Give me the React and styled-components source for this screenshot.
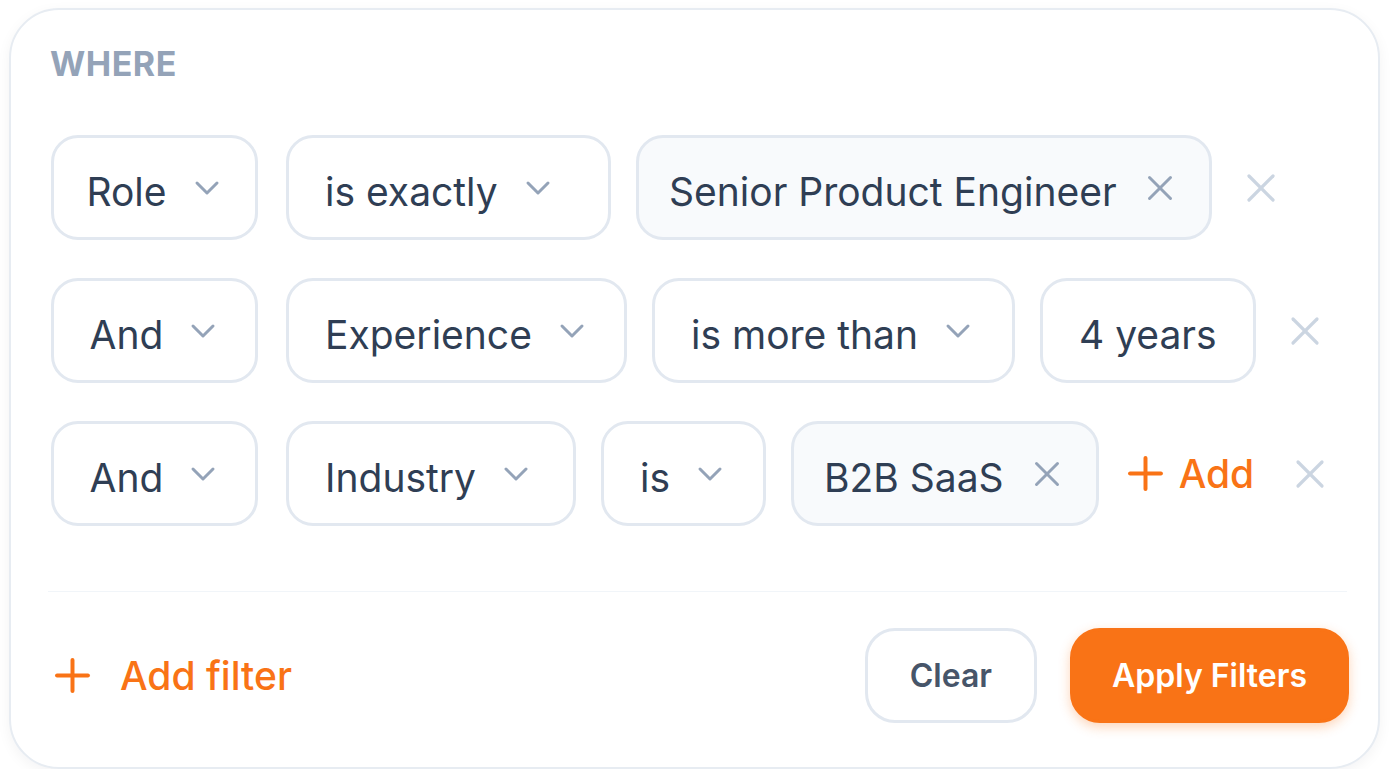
import React from 'react';
import styled, {createGlobalStyle} from 'styled-components';
import {ChevronDown, X, Plus} from 'lucide-react';

const GlobalStyle = createGlobalStyle`
    html, body {
        margin: 0;
        padding: 0;
        background: #ffffff;
        font-family: Inter, "Noto Sans", sans-serif;
    }
`;

const Card = styled.div`
    box-sizing: border-box;
    width: 1371px;
    height: 761px;
    margin: 8px 0 0 9px;
    padding: 37px 29px 44px 40px;
    border: 2px solid #e7ecf2;
    border-radius: 50px;
    background: #ffffff;
    box-shadow: 0 4px 14px rgba(15, 23, 42, 0.05);
    display: flex;
    flex-direction: column;
`;

const Title = styled.div`
    font-size: 34px;
    line-height: 34px;
    font-weight: 700;
    letter-spacing: 0.5px;
    color: #94a3b8;
    margin-left: -1px;
    margin-bottom: 54px;
`;

const Rows = styled.div`
    display: flex;
    flex-direction: column;
    gap: 38px;
`;

const Row = styled.div`
    display: flex;
    align-items: center;
    gap: 25px;
`;

const Box = styled.div`
    box-sizing: border-box;
    flex-shrink: 0;
    height: 105px;
    display: flex;
    align-items: center;
    justify-content: ${p => (p.$center ? 'center' : 'flex-start')};
    gap: ${p => (p.$chip ? '22px' : '20px')};
    width: ${p => (p.$width ? p.$width + 'px' : 'auto')};
    padding: ${p => (p.$center ? '0 0 0 4px' : p.$chip ? '0 28px 0 30px' : '0 36px')};
    margin-right: ${p => (p.$center ? '3px' : '0')};
    border: 3px solid #e2e8f0;
    border-radius: 27px;
    background: ${p => (p.$chip ? '#f8fafc' : '#ffffff')};
    color: #2f3e54;
    font-size: 39px;
    white-space: nowrap;
`;

const Label = styled.span`
    padding-top: 8px;
`;

const IconBtn = styled.span`
    display: flex;
    align-items: center;
    justify-content: center;
    flex-shrink: 0;
    color: ${p => p.$color || '#94a3b8'};
`;

const AddLink = styled.div`
    display: flex;
    align-items: center;
    flex-shrink: 0;
    gap: ${p => p.$gap}px;
    color: #f97316;
    font-size: 39px;
    font-weight: 500;
    margin-left: ${p => p.$offset || 0}px;
    margin-right: ${p => p.$after || 0}px;
`;

const Divider = styled.div`
    height: 2px;
    background: #f1f5f9;
    margin: 65px 2px 36px -3px;
`;

const Footer = styled.div`
    display: flex;
    align-items: center;
    justify-content: space-between;
`;

const Actions = styled.div`
    display: flex;
    align-items: center;
    gap: 33px;
`;

const Button = styled.button`
    box-sizing: border-box;
    height: 95px;
    padding: ${p => (p.$primary ? '0 39px' : '0 42px')};
    border-radius: 30px;
    font-family: inherit;
    font-size: 32px;
    font-weight: 600;
    cursor: pointer;
    border: 3px solid ${p => (p.$primary ? '#f97316' : '#e2e8f0')};
    background: ${p => (p.$primary ? '#f97316' : '#ffffff')};
    color: ${p => (p.$primary ? '#ffffff' : '#475569')};
    box-shadow: ${p => (p.$primary ? '0 4px 12px rgba(249, 115, 22, 0.3)' : 'none')};
`;

const Chevron = () => (
    <IconBtn><ChevronDown size={40} strokeWidth={1.8} /></IconBtn>
);

const Select = ({label, width, fixed}) => (
    <Box $center={!!fixed} $width={width}>
        <Label>{label}</Label>
        <Chevron />
    </Box>
);

const Chip = ({label}) => (
    <Box $chip>
        <Label>{label}</Label>
        <IconBtn><X size={42} strokeWidth={1.7} /></IconBtn>
    </Box>
);

const RemoveRow = () => (
    <IconBtn $color="#cbd5e1"><X size={48} strokeWidth={1.6} /></IconBtn>
);

export default function App() {
    return (
        <>
            <GlobalStyle />
            <Card>
                <Title>WHERE</Title>
                <Rows>
                    <Row>
                        <Select label="Role" width={207} fixed />
                        <Select label="is exactly" width={325} />
                        <Chip label="Senior Product Engineer" />
                        <RemoveRow />
                    </Row>
                    <Row>
                        <Select label="And" width={207} fixed />
                        <Select label="Experience" width={341} />
                        <Select label="is more than" width={363} />
                        <Box><Label>4 years</Label></Box>
                        <RemoveRow />
                    </Row>
                    <Row>
                        <Select label="And" width={207} fixed />
                        <Select label="Industry" width={290} />
                        <Select label="is" width={165} />
                        <Chip label="B2B SaaS" />
                        <AddLink $gap={7} $offset={-5} $after={7}>
                            <Plus size={53} strokeWidth={1.8} />
                            <span>Add</span>
                        </AddLink>
                        <RemoveRow />
                    </Row>
                </Rows>
                <Divider />
                <Footer>
                    <AddLink $gap={21} $offset={-5}>
                        <Plus size={53} strokeWidth={1.8} />
                        <span>Add filter</span>
                    </AddLink>
                    <Actions>
                        <Button>Clear</Button>
                        <Button $primary>Apply Filters</Button>
                    </Actions>
                </Footer>
            </Card>
        </>
    );
}
